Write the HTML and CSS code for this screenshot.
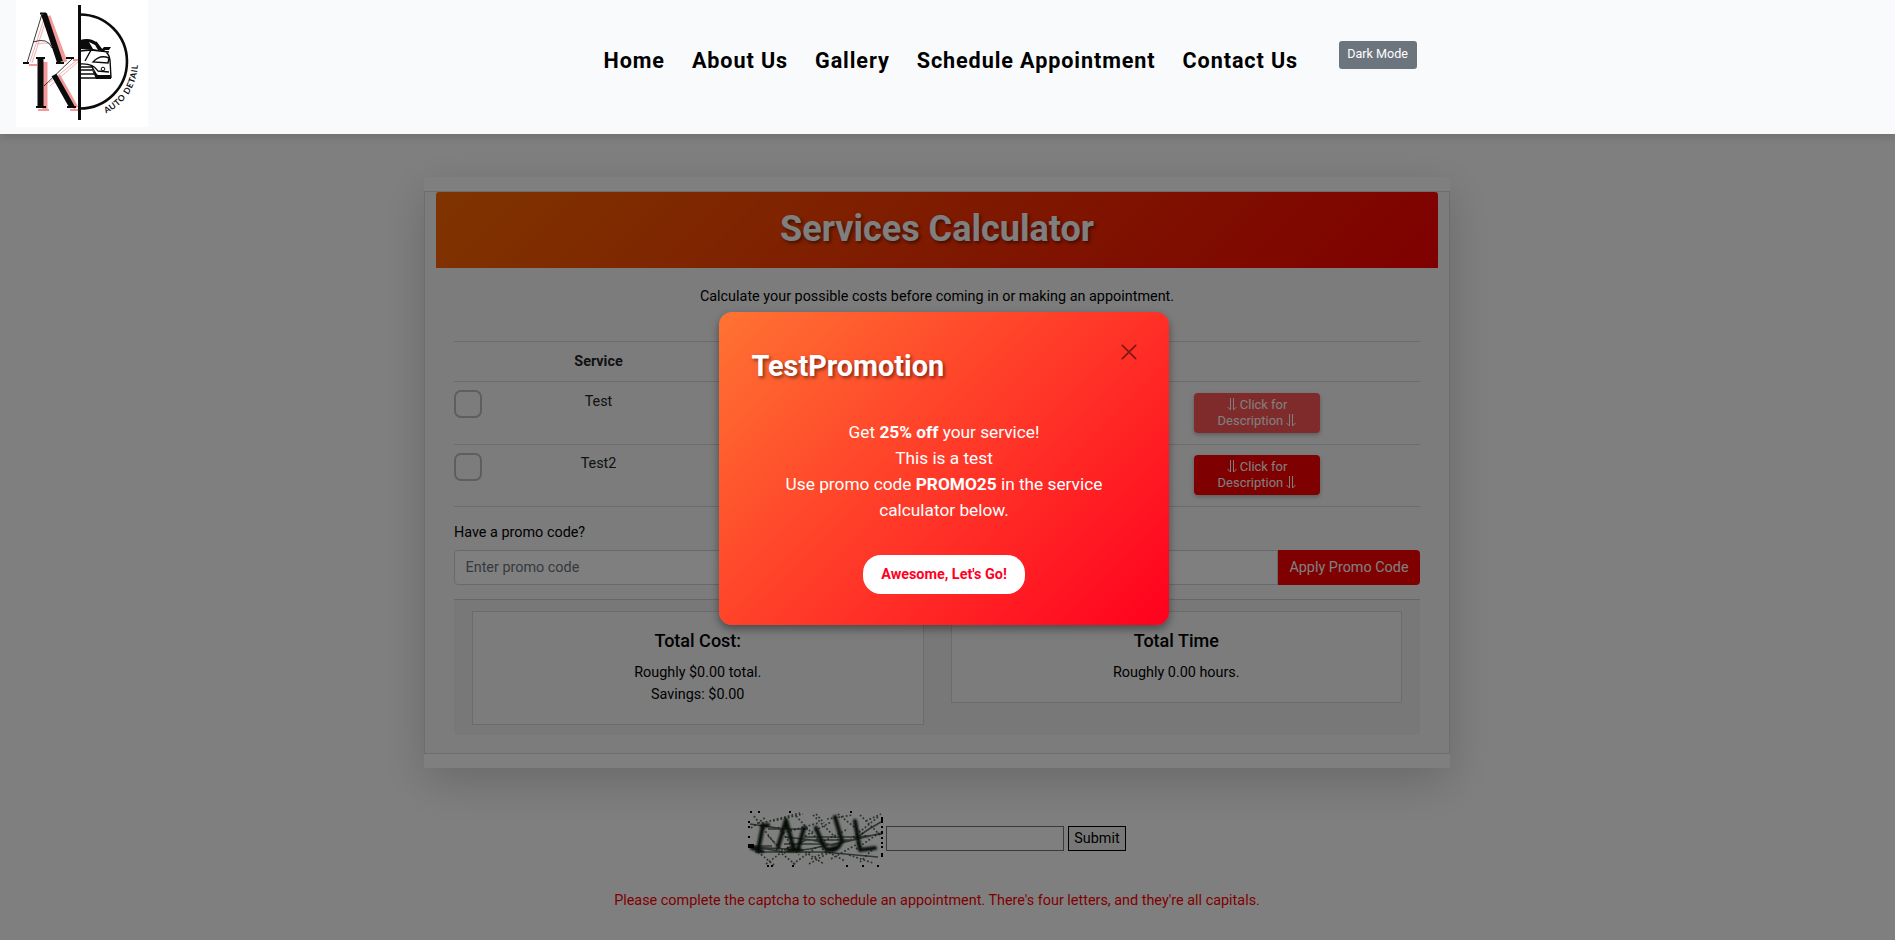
FILE: index.html
```
<!DOCTYPE html>
<html lang="en">
<head>
<meta charset="utf-8">
<title>AK Auto Detail - Services Calculator</title>
<link rel="stylesheet" href="styles.css">
</head>
<body>
<svg class="defs"><symbol id="down" viewBox="0 0 10 13"><path d="M3.500 0V12L.5 9M6.500 0V12L9.500 9"/></symbol></svg>
<header class="site-header">
  <svg class="logo" viewBox="0 0 132 127" role="img" aria-label="AK Auto Detail">
    <rect width="132" height="127" fill="#fff"/>
    <defs><path id="arc" d="M90 113.500A57 57 0 0 0 122 60"/></defs>
    <g class="logo-shadow">
      <path stroke-width="5" d="M32 16l17 46M29 62v47M42 76l18 32"/><path stroke-width="2" d="M13 65h8M22 110h11M57 60h5M54 110h9"/>
      <path stroke-width=".8" d="M28 19L14 62M30 20L16 63M21 44Q38 40 42 52M33 83L61 60M34 86L63 61"/>
    </g>
    <g fill="none" stroke="#0b0b0b">
      <path stroke-width="6" d="M28 14L44 62"/><path stroke-width=".8" d="M26 14L11 63M17 42Q32 37 36 48"/>
      <path stroke-width="2" d="M24 13.500h6M7 63h6M40 63h8"/>
      <path stroke-width="6" d="M24.500 58v49"/><path stroke-width="5.500" d="M38 75l18 32"/><path stroke-width=".8" d="M28 86L56 59"/>
      <path stroke-width="2" d="M20 58h9M20 107h10M50 58h8M51 107h9"/>
      <path stroke-width="3" d="M63.500 5v115"/><path stroke-width="2.600" d="M64 14.500A47 47 0 0 1 64 108.500"/>
    </g>
    <path d="M64 40Q75 37 81 43L87 51L64 49Z" fill="#0b0b0b"/>
    <path d="M77 49l-4-7 6 3 3 5z" fill="#fff"/>
    <path d="M64 51L75 50 69 61M80 42L86 50Q93 52 94 60L95 78M75 50L93 52M77 62Q84 54 93 58L92 63ZM64 64Q77 63 82 71L93 72M64 67h12l4 7M64 70h13M64 74h14M64 78h30" fill="none" stroke="#0b0b0b" stroke-width="1.400"/>
    <path d="M85 50l3-3h7l-2 3zM76 70l6 5h13v4H80z" fill="#0b0b0b"/><circle cx="87" cy="69" r="1.800" fill="none" stroke="#0b0b0b"/>
    <text class="logo-text"><textPath href="#arc">AUTO DETAIL</textPath></text>
  </svg>
  <nav class="nav">
    <a>Home</a><a>About Us</a><a>Gallery</a><a>Schedule Appointment</a><a>Contact Us</a>
    <button class="dark-mode">Dark Mode</button>
  </nav>
</header>

<main class="page">
  <section class="calculator">
    <div class="card">
      <h1 class="card-title">Services Calculator</h1>
      <div class="card-body">
        <p class="intro">Calculate your possible costs before coming in or making an appointment.</p>
        <div class="services">
          <div class="row row-head"><span></span><span class="name">Service</span></div>
          <div class="row">
            <span class="check"></span><span class="name">Test</span>
            <button class="describe is-hover"><svg class="down"><use href="#down"/></svg> Click for<br>Description <svg class="down"><use href="#down"/></svg></button>
          </div>
          <div class="row row-last">
            <span class="check"></span><span class="name">Test2</span>
            <button class="describe"><svg class="down"><use href="#down"/></svg> Click for<br>Description <svg class="down"><use href="#down"/></svg></button>
          </div>
        </div>
        <label class="promo-label">Have a promo code?</label>
        <div class="promo"><input class="promo-input" placeholder="Enter promo code"><button class="promo-apply">Apply Promo Code</button></div>
        <div class="totals">
          <div class="total total-cost"><h2>Total Cost:</h2><p>Roughly $0.00 total.</p><p>Savings: $0.00</p></div>
          <div class="total"><h2>Total Time</h2><p>Roughly 0.00 hours.</p></div>
        </div>
      </div>
    </div>
  </section>

  <form class="captcha">
    <svg class="captcha-image" viewBox="0 0 135 56" role="img" aria-label="Captcha">
      <g class="noise">
        <path d="M6 5L27 33M14 12L52 2M25 10L55 3M30 16L51 44M48 5L72 31M65 4L90 29M79 8L105 4M90 3L120 27M112 4L132 24M130 6L103 28M10 41L26 54M18 53L42 35M28 38L48 54M45 53L69 36M54 39L76 53M61 53L89 37M74 38L97 50M83 48L111 32M101 44L125 52M108 38L131 22M35 22L70 12M57 25L83 11M76 30L100 18M20 25L38 43M3 17L18 6M63 48L78 41M68 3L76 12M118 10L133 3M112 51L124 39"/>
      </g>
      <g class="lines">
        <path d="M2 13L36 18M2 36L38 38L58 29H105L121 18L133 11M7 41H75L130 46M37 26L64 29L84 34L134 22M6 36L36 41L62 38L104 29M2 35H24M20 18H60M56 26H110L134 23M36 33H80"/>
      </g>
      <g class="letters">
        <path d="M15 14L10 40M4 37L14 40M14 15L20 14M30 36L38 9L46 39M40 39H52M50 38L56 17M68 17L76 36Q84 43 91 35L94 30L87 6M79 39L90 36M107 10L112 39L127 37"/>
      </g>
      <g fill="#000">
        <path d="M2 0h2v2H2zM10 0h2v2h-2zM41 0h2v2h-2zM102 0h2v2h-2zM0 10h2v2H0zM0 15h2v2H0zM0 25h2v2H0zM0 33h6v4H0zM19 54h2v2h-2zM23 54h2v2h-2zM44 54h2v2h-2zM98 54h2v2h-2zM114 54h2v2h-2zM129 54h2v2h-2zM133 6h2v6h-2zM133 15h2v2h-2zM133 20h2v3h-2zM133 26h2v2h-2zM133 31h2v2h-2zM133 35h2v2h-2zM133 42h2v4h-2z"/>
      </g>
    </svg>
    <input class="captcha-input"><button class="captcha-submit" type="button">Submit</button>
  </form>
  <p class="captcha-error">Please complete the captcha to schedule an appointment. There's four letters, and they're all capitals.</p>
</main>

<div class="overlay">
  <div class="modal">
    <div class="modal-head">
      <h2>TestPromotion</h2>
      <svg class="close" viewBox="0 0 16 16"><path d="M1.300 1.300L14.700 14.700M14.700 1.300L1.300 14.700"/></svg>
    </div>
    <p class="modal-text">Get <b>25% off</b> your service!<br>This is a test<br>Use promo code <b>PROMO25</b> in the service calculator below.</p>
    <button class="modal-button">Awesome, Let's Go!</button>
  </div>
</div>
</body>
</html>
```
FILE: styles.css
```
* { box-sizing: border-box; }
body {
  margin: 0;
  height: 940px;
  overflow: hidden;
  background: #fff;
  color: #000;
  font: 14.4px/21.6px Roboto, sans-serif;
}
h1, h2, p { margin: 0; }
button, input { font-family: inherit; border: 0; margin: 0; }
.defs { display: none; }

.site-header {
  position: relative;
  z-index: 20;
  display: flex;
  height: 134px;
  padding-left: 16px;
  background: #f8fafc;
  box-shadow: 0 3.6px 7.2px rgba(0, 0, 0, .1);
}
.logo { width: 132px; height: 127px; flex: none; }
.logo-shadow { fill: none; stroke: #f29a9a; filter: blur(.4px); }
.logo-text { font: 700 8.500px Lato, sans-serif; letter-spacing: .6px; fill: #111; }
.nav { display: flex; align-items: flex-start; padding: 41px 0 0 455.500px; }
.nav a {
  margin-right: 27px;
  padding-top: 4px;
  font-size: 21.6px;
  line-height: 32px;
  font-weight: 700;
  letter-spacing: .9px;
  white-space: nowrap;
}
.dark-mode {
  width: 78px;
  height: 28px;
  margin-left: 13.500px;
  padding: 0 0 3px;
  border-radius: 3px;
  background: #6c757d;
  color: #fff;
  font-size: 12.6px;
}

.page { padding-top: 43px; }
.calculator {
  width: 1026px;
  height: 591px;
  margin-left: 424px;
  padding: 14px 0;
  background: #fff;
  box-shadow: 0 14.4px 43.2px rgba(0, 0, 0, .175);
}
.card { height: 563px; padding: 0 11px; border: 1px solid #dadada; background: #f8f8f8; }
.card-title {
  height: 76px;
  border-radius: 3px 3px 0 0;
  background: linear-gradient(135deg, #ff6a00, #f00);
  color: #fff;
  font-size: 36px;
  line-height: 74px;
  text-align: center;
  text-shadow: 1.8px 1.8px 3.6px rgba(0, 0, 0, .5);
}
.card-body { padding: 18px 18px 0; }
.intro { text-align: center; }
.services { margin-top: 33px; }
.row {
  display: grid;
  grid-template-columns: 73px 143px 1fr;
  height: 62px;
  border-top: 1px solid #d8d8d8;
  color: #212529;
}
.row:nth-child(2) { height: 63px; }
.row-head { height: 40px; font-weight: 700; }
.row-last { height: 63px; border-bottom: 1px solid #d8d8d8; }
.name { padding-top: 9px; text-align: center; }
.row-last .name { padding-top: 8px; }
.check { width: 28px; height: 28px; margin-top: 8px; border: 2px solid #bdbdbd; border-radius: 7px; }
.describe {
  width: 126px;
  height: 40px;
  margin: 11px 0 0 524px;
  padding: 0;
  border-radius: 4px;
  background: #f00;
  color: #fff;
  font-size: 12.96px;
  line-height: 15.500px;
  white-space: nowrap;
  box-shadow: 0 2px 4px rgba(0, 0, 0, .25);
}
.down { width: 10px; height: 13px; vertical-align: -2px; fill: none; stroke: #fff; stroke-width: 1; }
.row-last .describe { margin-top: 10px; }
.describe.is-hover { background: #ff5656; }
.promo-label { display: block; margin-top: 15px; }
.promo { display: flex; height: 35px; margin-top: 7px; }
.promo-input {
  flex: 1;
  padding: 0 10.500px;
  border: 1px solid #ced4da;
  border-radius: 4px 0 0 4px;
  background: #fff;
  font-size: 14.4px;
}
.promo-input::placeholder { color: #6c757d; }
.promo-apply {
  width: 142px;
  padding: 0;
  border-radius: 0 4px 4px 0;
  background: #f00;
  color: #fff;
  font-size: 14.4px;
}
.totals {
  display: flex;
  align-items: flex-start;
  gap: 27px;
  height: 136px;
  margin-top: 14px;
  padding: 11px 18px;
  border-top: 1px solid #cfcfcf;
  border-radius: 0 0 4px 4px;
  background: #f0f0f0;
}
.total { flex: 1; padding: 18px 0; border: 1px solid #d8d8d8; background: #f8f8f8; text-align: center; }
.total-cost { padding-bottom: 19px; }
.total h2 { margin-bottom: 10px; font-size: 18px; line-height: 22px; font-weight: 500; }

.captcha { display: flex; align-items: flex-start; height: 56px; margin: 43px 0 0 748px; }
.captcha-image { width: 135px; height: 56px; }
.noise { fill: none; stroke: #56665a; stroke-width: 1.7; stroke-dasharray: 1.8 2; filter: blur(.3px); }
.lines { fill: none; stroke: #2f3d31; stroke-width: 1.7; opacity: .75; filter: blur(.4px); }
.letters { fill: none; stroke: #0c1a0e; stroke-width: 4.2; stroke-linecap: round; stroke-linejoin: round; filter: blur(.9px); }
.captcha-input { width: 178px; height: 25px; margin: 15px 0 0 3px; border: 1px solid #767676; background: #fff; }
.captcha-submit { width: 58px; height: 25px; margin: 15px 0 0 4px; padding: 0; border: 1px solid #000; background: #efefef; font-size: 14.4px; }
.captcha-error { margin-top: 23px; padding-right: 21px; color: #f00; text-align: center; }

.overlay {
  position: absolute;
  inset: 0;
  z-index: 10;
  padding: 312px 0 0 719px;
  background: rgba(0, 0, 0, .5);
}
.modal {
  width: 450px;
  height: 313px;
  padding: 32px;
  border-radius: 13px;
  background: linear-gradient(135deg, #ff7332, #ff001e);
  box-shadow: 0 4px 9px rgba(0, 0, 0, .4);
  color: #fff;
  text-align: center;
}
.modal-head { display: flex; justify-content: space-between; height: 75px; padding: 1px 0 0 .5px; }
.modal-head h2 { font-size: 28.8px; line-height: 42px; text-shadow: 1.8px 1.8px 3.6px rgba(0, 0, 0, .5); }
.close { width: 16px; height: 16px; margin-top: -1px; fill: none; stroke: #000; stroke-width: 1.7; stroke-linecap: round; opacity: .5; }
.modal-text { padding: 0 20px; font-size: 17.28px; line-height: 26px; }
.modal-button {
  width: 162px;
  height: 39px;
  margin-top: 32px;
  padding: 0;
  border-radius: 18px;
  background: #fff;
  color: #ff0022;
  font-size: 14.4px;
  font-weight: 700;
}
```
